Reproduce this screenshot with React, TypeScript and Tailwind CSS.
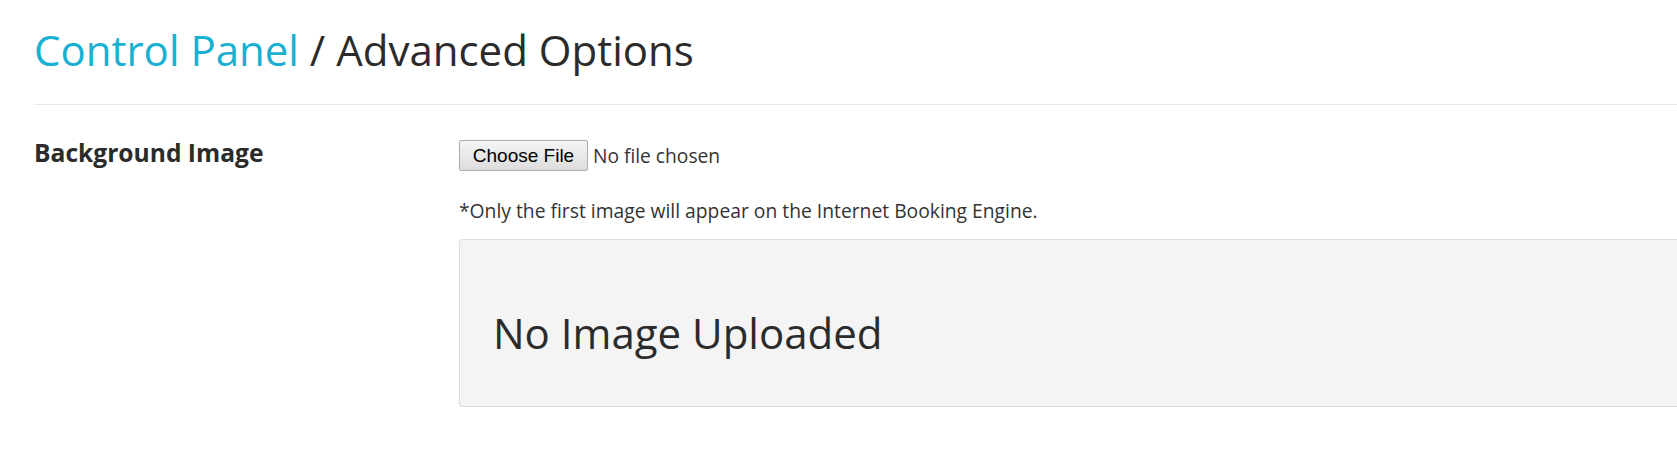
import React from "react";

const AdvancedOptions = () => {
  return (
    <div className="min-h-[456px] w-full overflow-hidden bg-white font-['Open_Sans',sans-serif] text-[#2b2b2b]">
      <div className="w-[1720px] pl-[34px] pt-[27px]">
        <h1 className="text-[42px] leading-[46px] font-normal">
          <span className="text-[#1ab0d2]">Control Panel</span>
          <span> / Advanced Options</span>
        </h1>
        <div className="mt-[31px] border-t border-[#e8e8e8]" />

        <div className="mt-[32px] flex items-start">
          <div className="w-[425px] shrink-0 text-[24.6px] leading-[32px] font-bold">
            Background Image
          </div>
          <div className="flex-1 pt-[3px]">
            <div className="flex items-center">
              <button className="h-[31px] w-[129px] rounded-[2px] border border-[#acacac] bg-gradient-to-b from-[#f5f5f5] to-[#dddddd] font-['Liberation_Sans',Arial,sans-serif] text-[19px] leading-none text-black">
                Choose File
              </button>
              <span className="ml-[5px] text-[19.2px] leading-[26px] text-[#333]">
                No file chosen
              </span>
            </div>
            <p className="mt-[27px] text-[19.3px] leading-[26px] text-[#333]">
              *Only the first image will appear on the Internet Booking Engine.
            </p>
            <div className="mt-[15px] h-[168px] rounded-[3px] border border-[#dcdcdc] bg-[#f4f4f4] pl-[33px] pt-[70px]">
              <h2 className="text-[42px] leading-[46px] font-normal text-[#2b2b2b]">
                No Image Uploaded
              </h2>
            </div>
          </div>
        </div>
      </div>
    </div>
  );
};

export default function App() {
  return <AdvancedOptions />;
}
